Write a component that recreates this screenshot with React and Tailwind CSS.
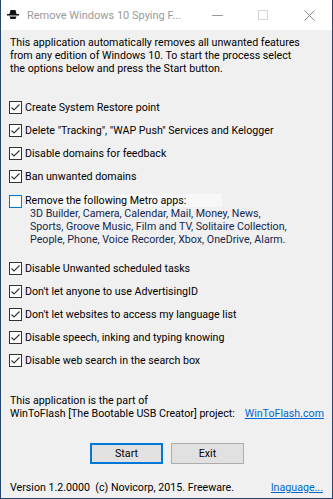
const options = [
  { label: "Create System Restore point", checked: true },
  { label: "Delete \"Tracking\", \"WAP Push\" Services and Kelogger", checked: true },
  { label: "Disable domains for feedback", checked: true },
  { label: "Ban unwanted domains", checked: true },
];

const moreOptions = [
  "Disable Unwanted scheduled tasks",
  "Don't let anyone to use AdvertisingID",
  "Don't let websites to access my language list",
  "Disable speech, inking and typing knowing",
  "Disable web search in the search box",
];

function Box({ checked, hot }) {
  return (
    <span
      className={
        "flex h-[13px] w-[13px] shrink-0 items-center justify-center bg-white border " +
        (hot ? "border-[#0078d7]" : "border-[#333333]")
      }
    >
      {checked && (
        <svg width="11" height="11" viewBox="0 0 11 11">
          <path d="M1.5 5.5 L4 8 L9.5 2.5" fill="none" stroke="#333333" strokeWidth="1.1" />
        </svg>
      )}
    </span>
  );
}

function Row({ label, checked }) {
  return (
    <div className="flex h-[23px] items-center gap-[3px]">
      <Box checked={checked} />
      <span>{label}</span>
    </div>
  );
}

export default function App() {
  return (
    <div className="flex h-[499px] w-[333px] flex-col overflow-hidden whitespace-nowrap border-x border-b border-[#25456f] bg-[#f0f0f0] font-['Roboto',sans-serif] text-[10.67px] leading-[13px] text-black">
      {/* title bar */}
      <div className="flex h-[30px] shrink-0 items-center bg-white">
        <svg className="ml-[6px]" width="12" height="10" viewBox="0 0 12 10">
          <path d="M3.5 0 H8.5 L9.5 4 H2.5 Z" fill="#111" />
          <rect x="0" y="4" width="12" height="1.5" fill="#111" />
          <path d="M2.5 6.5 H9.5 L8.5 9 H3.5 Z" fill="#111" />
        </svg>
        <span className="ml-[8px] text-[11px] text-[#9a9a9a]">Remove Windows 10 Spying F...</span>
        <div className="ml-auto flex h-full items-center">
          <span className="flex w-[46px] justify-center">
            <span className="block h-px w-[11px] bg-[#9a9a9a]" />
          </span>
          <span className="flex w-[46px] justify-center">
            <span className="block h-[10px] w-[10px] border border-[#d5d5d5]" />
          </span>
          <span className="flex w-[46px] justify-center">
            <svg width="11" height="11" viewBox="0 0 11 11">
              <path d="M0.5 0.5 L10.5 10.5 M10.5 0.5 L0.5 10.5" stroke="#8a8a8a" strokeWidth="1" />
            </svg>
          </span>
        </div>
      </div>

      <div className="flex flex-1 flex-col px-[8px]">
        <p className="mt-[6px] pl-px">
          This application automatically removes all unwanted features
          <br />
          from any edition of Windows 10. To start the process select
          <br />
          the options below and press the Start button.
        </p>

        <div className="mt-[21px] flex flex-col">
          {options.map((o) => (
            <Row key={o.label} {...o} />
          ))}
          <div className="mt-[6px] flex gap-[3px]">
            <span className="mt-px">
              <Box checked={false} hot />
            </span>
            <div className="flex flex-col">
              <span className="w-fit bg-[#f7f7f7] pr-[36px]">Remove the following Metro apps:</span>
              <span className="pl-[5px] text-[#14284f]">
                3D Builder, Camera, Calendar, Mail, Money, News,
                <br />
                Sports, Groove Music, Film and TV, Solitaire Collection,
                <br />
                People, Phone, Voice Recorder, Xbox, OneDrive, Alarm.
              </span>
            </div>
          </div>
          <div className="mt-[11px] flex flex-col">
            {moreOptions.map((l) => (
              <Row key={l} label={l} checked />
            ))}
          </div>
        </div>

        <div className="mt-[22px] pl-px">
          <div>This application is the part of</div>
          <div className="flex justify-between">
            <span>WinToFlash [The Bootable USB Creator] project:</span>
            <span className="text-[#0066cc] underline">WinToFlash.com</span>
          </div>
        </div>

        <div className="mt-[23px] flex justify-center gap-[8px] pl-[1px]">
          <button className="h-[21px] w-[73px] border-2 border-[#0078d7] bg-[#e1e1e1]">Start</button>
          <button className="h-[21px] w-[73px] border border-[#adadad] bg-[#e1e1e1]">Exit</button>
        </div>

        <div className="mt-auto mb-[4px] flex items-center justify-between pl-px">
          <span>Version 1.2.0000&nbsp; (c) Novicorp, 2015. Freeware.</span>
          <span className="mr-px text-[#0066cc] underline">lnaguage...</span>
        </div>
      </div>
    </div>
  );
}
